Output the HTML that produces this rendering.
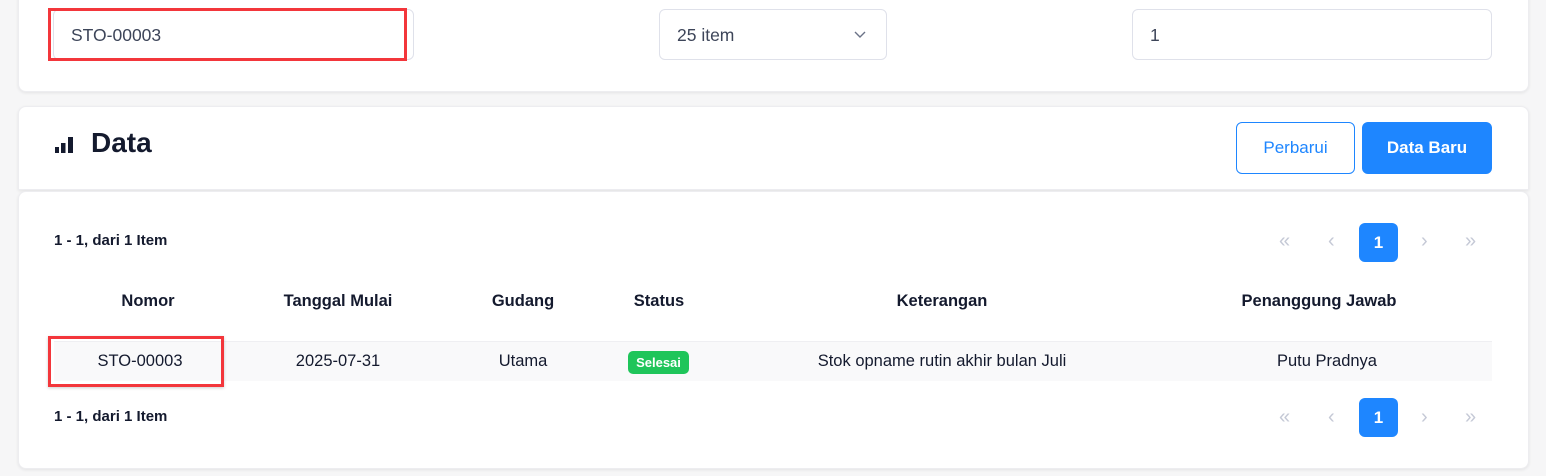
<!DOCTYPE html>
<html><head><meta charset="utf-8"><style>
*{box-sizing:border-box;margin:0;padding:0}
body{width:1546px;height:476px;background:#f6f6f7;font-family:"Liberation Sans",sans-serif;color:#141a2e;position:relative;overflow:hidden}
.card{position:absolute;background:#fff;border-radius:8px;box-shadow:0 1px 3px rgba(0,0,0,.08);border:1px solid #ededf0}
.inp{position:absolute;background:#fff;border:1px solid #dfe1ea;border-radius:6px;font-size:17.5px;color:#3d4559;padding-left:17px;line-height:48px}
.abs{position:absolute}
.th{position:absolute;top:292px;font-weight:bold;font-size:16.5px;text-align:center}
.td{position:absolute;top:352px;font-size:16.5px;text-align:center}
.pg{position:absolute;color:#c5c9d6;font-size:20px}
.pb{position:absolute;width:39px;height:39px;background:#1e86ff;border-radius:6px;color:#fff;font-weight:bold;font-size:17px;text-align:center;line-height:39px}
</style></head><body>
<div class="card" style="left:18px;top:-10px;width:1511px;height:102px"></div>
<div class="inp" style="left:53px;top:9px;width:361px;height:51px;line-height:51px">STO-00003</div>
<div class="abs" style="left:48px;top:8px;width:359px;height:53px;border:3px solid #f3363b"></div>
<div class="inp" style="left:659px;top:9px;width:228px;height:51px;line-height:51px">25 item<svg style="position:absolute;right:20px;top:21px" width="12" height="8" viewBox="0 0 12 8"><path d="M1 1l5 5 5-5" stroke="#6b7287" stroke-width="1.4" fill="none"/></svg></div>
<div class="inp" style="left:1132px;top:9px;width:360px;height:51px;line-height:51px">1</div>

<div class="card" style="left:18px;top:106px;width:1511px;height:84px;border-radius:8px 8px 0 0"></div>
<svg class="abs" style="left:55px;top:136px" width="20" height="17" viewBox="0 0 20 17"><rect x="0" y="11" width="4" height="6" fill="#141a2e"/><rect x="6" y="7" width="4.5" height="10" fill="#141a2e"/><rect x="13" y="1" width="5" height="16" fill="#141a2e"/></svg>
<div class="abs" style="left:91px;top:127px;font-size:28px;font-weight:bold">Data</div>
<div class="abs" style="left:1236px;top:122px;width:119px;height:52px;border:1px solid #1e86ff;border-radius:6px;color:#1e86ff;font-size:17px;text-align:center;line-height:50px">Perbarui</div>
<div class="abs" style="left:1362px;top:122px;width:130px;height:52px;background:#1e86ff;border-radius:6px;color:#fff;font-size:17px;font-weight:bold;text-align:center;line-height:52px">Data Baru</div>

<div class="card" style="left:18px;top:191px;width:1511px;height:278px"></div>
<div class="abs" style="left:54px;top:232px;font-size:15px;font-weight:bold">1 - 1, dari 1 Item</div>
<div class="pg" style="left:1279px;top:230px">«</div><div class="pg" style="left:1328px;top:230px">‹</div>
<div class="pb" style="left:1359px;top:223px">1</div>
<div class="pg" style="left:1421px;top:230px">›</div><div class="pg" style="left:1465px;top:230px">»</div>

<div class="th" style="left:48px;width:200px">Nomor</div>
<div class="th" style="left:238px;width:200px">Tanggal Mulai</div>
<div class="th" style="left:463px;width:120px">Gudang</div>
<div class="th" style="left:599px;width:120px">Status</div>
<div class="th" style="left:742px;width:400px">Keterangan</div>
<div class="th" style="left:1169px;width:300px">Penanggung Jawab</div>

<div class="abs" style="left:54px;top:341px;width:1438px;height:40px;background:#f9f9fa;border-top:1px solid #efeff2"></div>
<div class="td" style="left:40px;width:200px">STO-00003</div>
<div class="td" style="left:238px;width:200px">2025-07-31</div>
<div class="td" style="left:463px;width:120px">Utama</div>
<div class="abs" style="left:628px;top:351px;width:61px;height:23px;background:#1fc55a;border-radius:5px;color:#fff;font-size:13px;font-weight:bold;text-align:center;line-height:23px">Selesai</div>
<div class="td" style="left:742px;width:400px">Stok opname rutin akhir bulan Juli</div>
<div class="td" style="left:1177px;width:300px">Putu Pradnya</div>
<div class="abs" style="left:48px;top:336px;width:176px;height:51px;border:3px solid #f3363b;box-shadow:0 1px 3px rgba(0,0,0,.2)"></div>

<div class="abs" style="left:54px;top:408px;font-size:15px;font-weight:bold">1 - 1, dari 1 Item</div>
<div class="pg" style="left:1279px;top:406px">«</div><div class="pg" style="left:1328px;top:406px">‹</div>
<div class="pb" style="left:1359px;top:398px">1</div>
<div class="pg" style="left:1421px;top:406px">›</div><div class="pg" style="left:1465px;top:406px">»</div>
</body></html>
